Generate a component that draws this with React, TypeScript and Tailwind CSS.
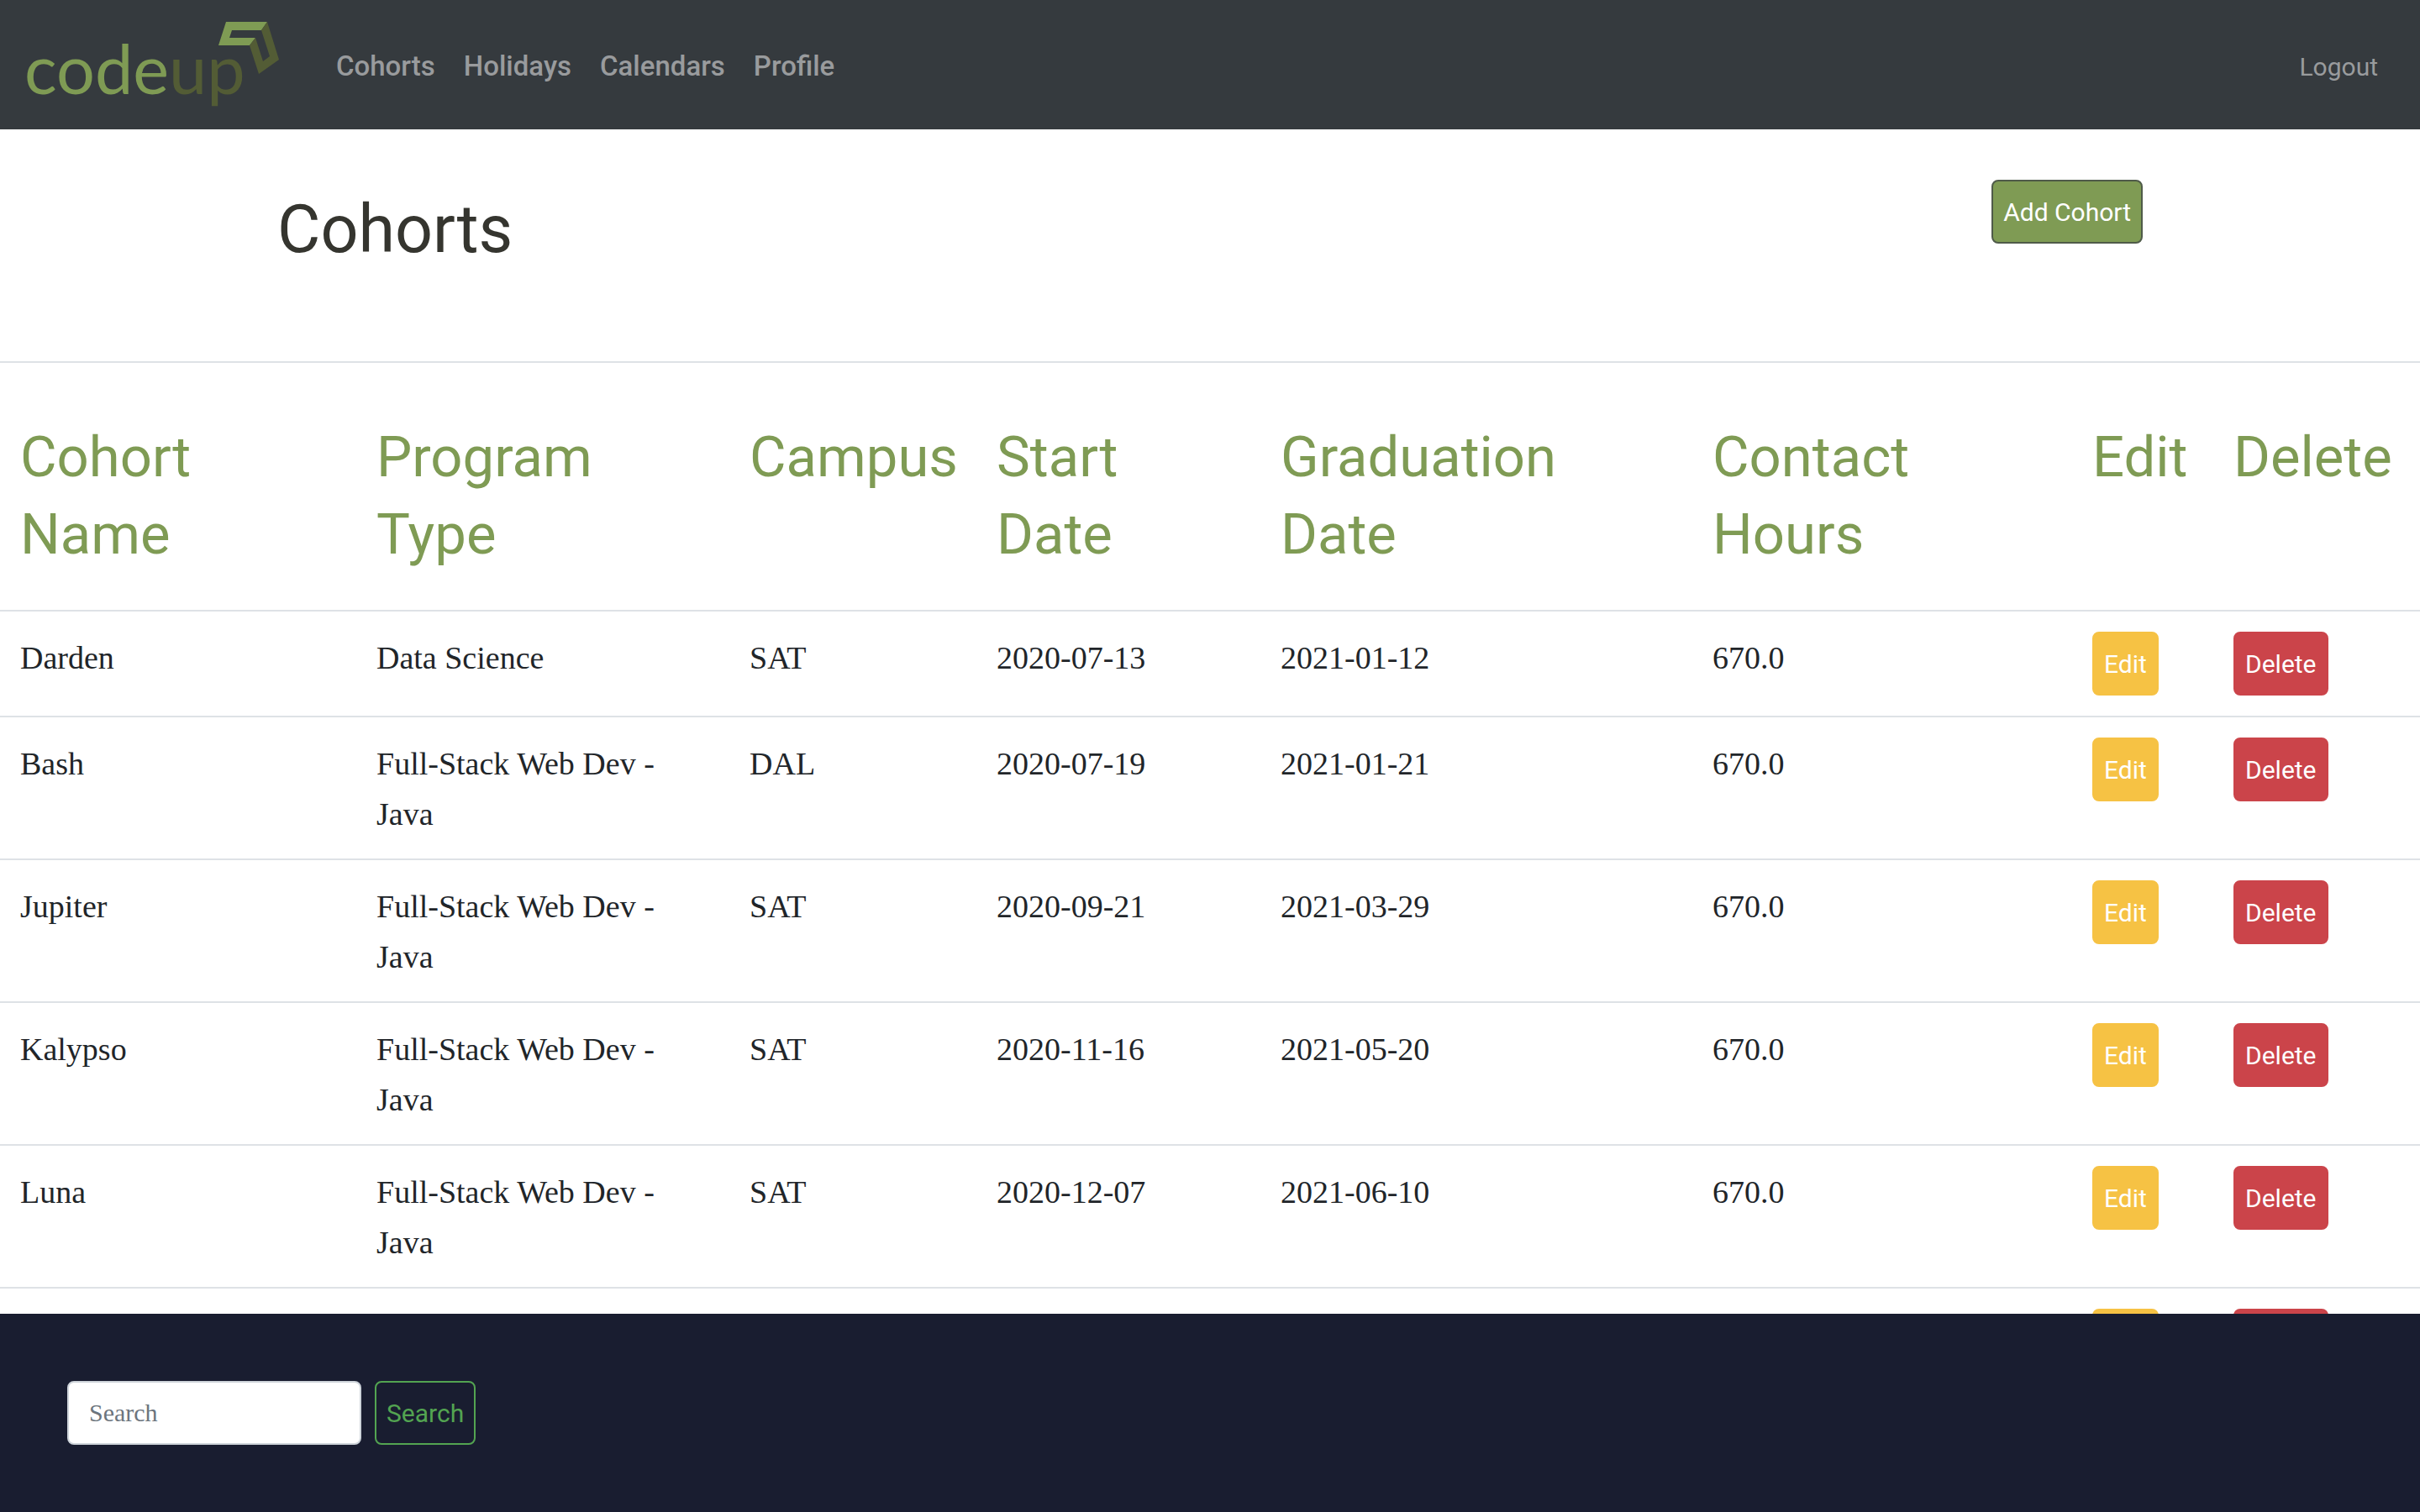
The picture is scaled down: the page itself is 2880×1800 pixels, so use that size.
const navLinks = ["Cohorts", "Holidays", "Calendars", "Profile"];

const columns = [
  { title: "Cohort Name", width: "w-[424px]" },
  { title: "Program Type", width: "w-[444px]" },
  { title: "Campus", width: "w-[294px]" },
  { title: "Start Date", width: "w-[338px]" },
  { title: "Graduation Date", width: "w-[514px]" },
  { title: "Contact Hours", width: "w-[452px]" },
  { title: "Edit", width: "w-[168px]" },
  { title: "Delete", width: "w-[246px]" },
];

const java = "Full-Stack Web Dev - Java";

const cohorts = [
  ["Darden", "Data Science", "SAT", "2020-07-13", "2021-01-12", "670.0"],
  ["Bash", java, "DAL", "2020-07-19", "2021-01-21", "670.0"],
  ["Jupiter", java, "SAT", "2020-09-21", "2021-03-29", "670.0"],
  ["Kalypso", java, "SAT", "2020-11-16", "2021-05-20", "670.0"],
  ["Luna", java, "SAT", "2020-12-07", "2021-06-10", "670.0"],
  ["", "", "", "", "", ""],
];

const button =
  "flex h-[76px] items-center rounded-lg border-2 px-3 pt-0.5 font-['Roboto',sans-serif] text-[30px] leading-none whitespace-nowrap";

function Logo() {
  return (
    <svg viewBox="0 0 304 102" className="h-[102px] w-[304px] overflow-visible" role="img" aria-label="codeup">
      <text x="-1" y="86" fontSize="81" fontFamily="Lato, sans-serif" fill="#7f9b54">
        code
        <tspan fill="#535c35">up</tspan>
      </text>
      <path d="M239 0H288L281 10H246L243 19H274L267 28H230Z" fill="#7f9b54" />
      <path d="M288 0L302 45L278 62L267 28L274 19L283 47L291 41L281 10Z" fill="#535c35" />
    </svg>
  );
}

export default function App() {
  return (
    <div className="flex h-screen flex-col overflow-hidden bg-white font-['Liberation_Serif',serif] text-[#212529]">
      <nav className="flex h-[154px] shrink-0 items-center bg-[#353a3e] pr-[50px] pl-[30px] font-['Roboto',sans-serif] text-[#999b9d]">
        <a href="#" className="mr-[66px]">
          <Logo />
        </a>
        <ul className="flex gap-[34px] pt-1 text-[33px] font-medium">
          {navLinks.map((name) => (
            <li key={name}>
              <a href="#">{name}</a>
            </li>
          ))}
        </ul>
        <a href="#" className="ml-auto pt-1 text-[30px]">
          Logout
        </a>
      </nav>

      <main className="min-h-0 flex-1 overflow-hidden">
        <header className="mx-auto flex h-[276px] w-full max-w-[2280px] items-start justify-between px-[30px] pt-[60px]">
          <h1 className="font-['Roboto',sans-serif] text-[79px] leading-[118px] text-[#35352f]">Cohorts</h1>
          <button type="button" className={`${button} border-[#4f5b49] bg-[#7f9b54] text-white`}>
            Add Cohort
          </button>
        </header>

        <table className="w-full table-fixed text-left text-[38px] leading-[60px]">
          <thead>
            <tr className="border-t-2 border-[#dee2e6] font-['Roboto',sans-serif] text-[67px] leading-[92px] text-[#7f9b54]">
              {columns.map((column) => (
                <th key={column.title} scope="col" className={`${column.width} px-6 pt-[66px] pb-[44px] align-top font-normal`}>
                  {column.title}
                </th>
              ))}
            </tr>
          </thead>
          <tbody>
            {cohorts.map((cells, row) => (
              <tr key={row} className="border-t-2 border-[#dee2e6]">
                {cells.map((cell, i) => (
                  <td key={i} className="px-6 pt-[25px] pb-[23px] align-top">
                    {cell}
                  </td>
                ))}
                <td className="p-6 align-top">
                  <button type="button" className={`${button} border-[#f6c244] bg-[#f6c244] text-white`}>
                    Edit
                  </button>
                </td>
                <td className="p-6 align-top">
                  <button type="button" className={`${button} border-[#cb444a] bg-[#cb444a] text-white`}>
                    Delete
                  </button>
                </td>
              </tr>
            ))}
          </tbody>
        </table>
      </main>

      <footer className="shrink-0 bg-[#191d30] p-20">
        <form className="flex gap-4">
          <input
            type="search"
            aria-label="Search"
            placeholder="Search"
            className="h-[76px] w-[350px] rounded-lg border-2 border-[#ced4da] bg-white px-6 text-[30px] placeholder:text-[#6c757d]"
          />
          <button type="submit" className={`${button} border-[#53a451] text-[#53a451]`}>
            Search
          </button>
        </form>
      </footer>
    </div>
  );
}
